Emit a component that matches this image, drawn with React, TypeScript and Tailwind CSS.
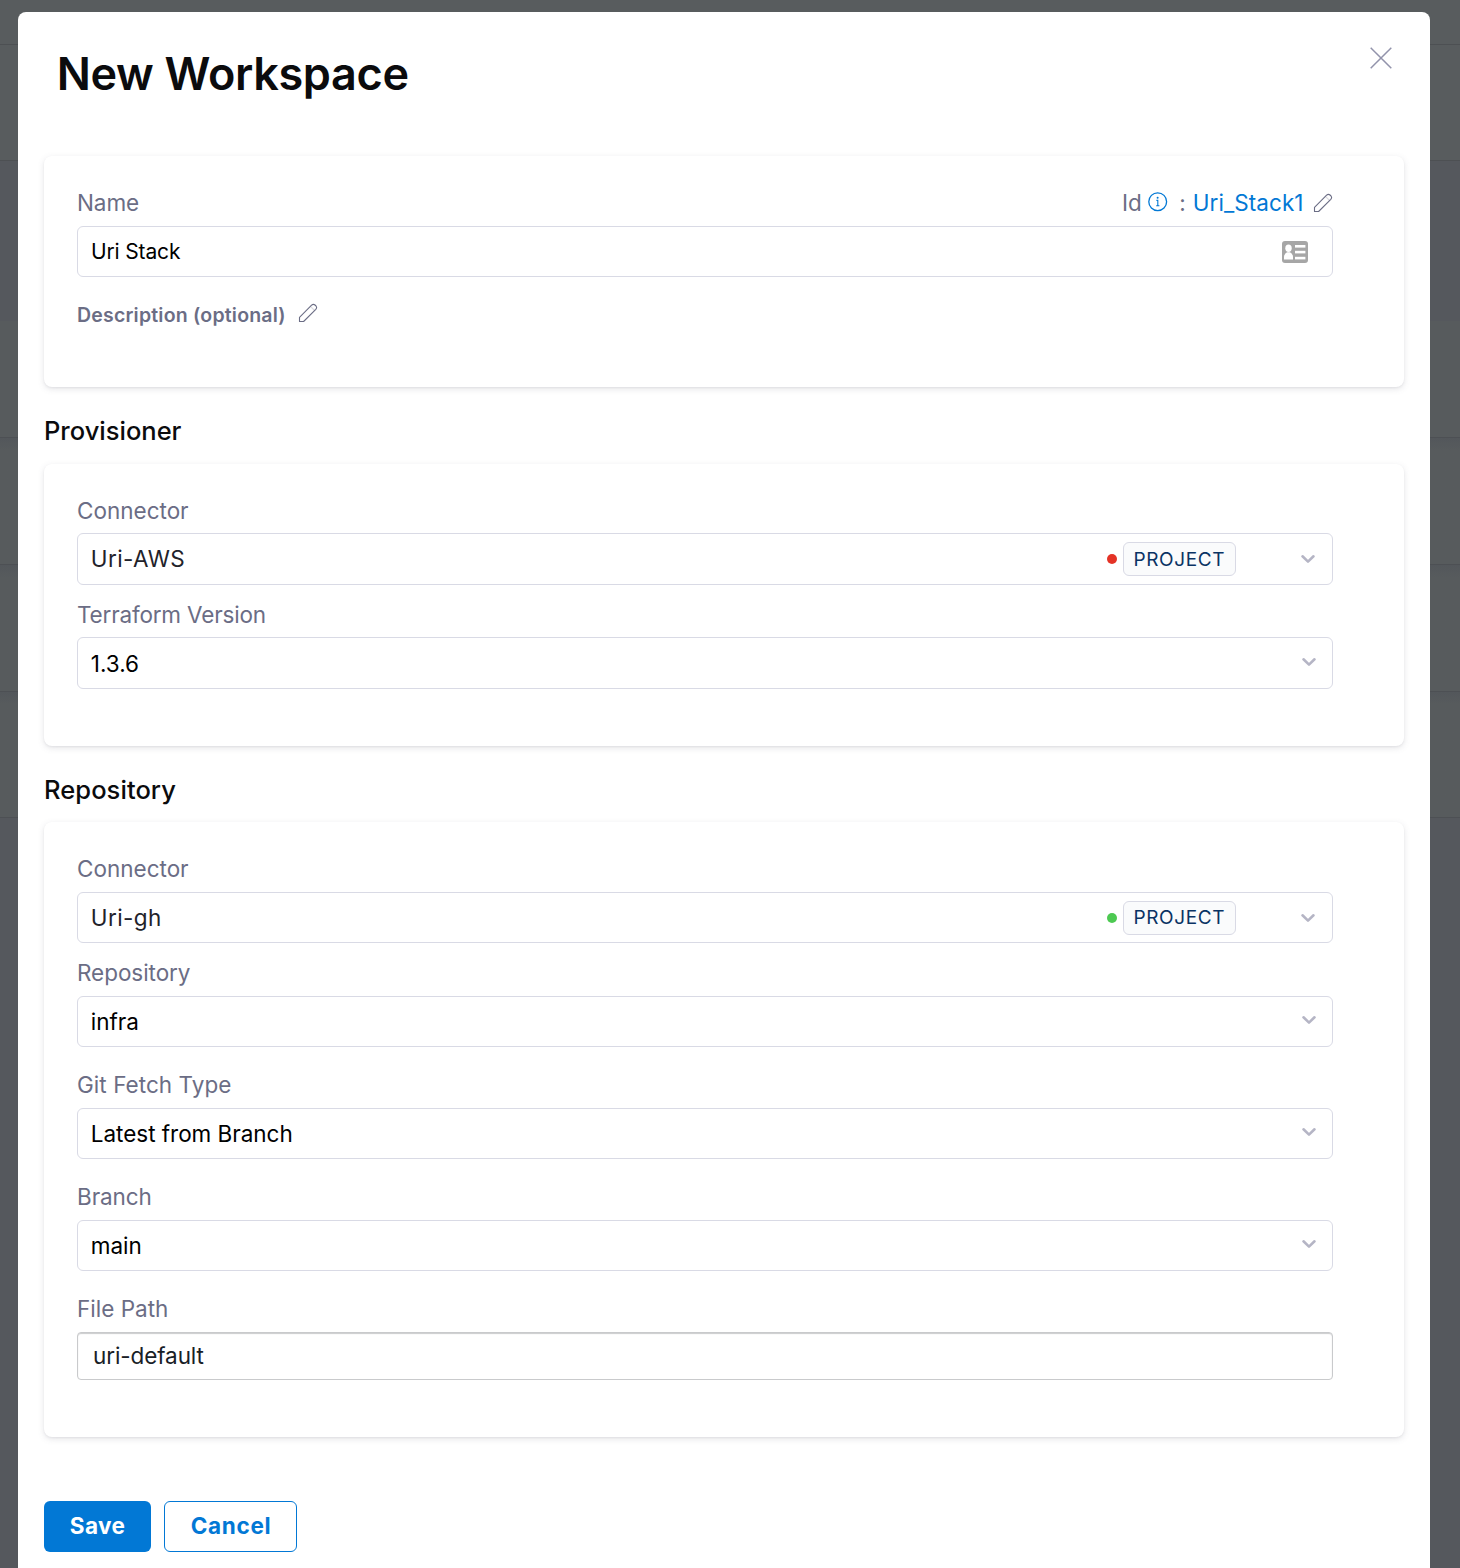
import React from "react";

function Chevron({ className }: { className: string }) {
  return (
    <svg viewBox="0 0 16 12" className={`h-3 w-4 shrink-0 ${className}`} fill="none" stroke="#b5b5c5" strokeWidth="2.6" strokeLinecap="round" strokeLinejoin="round">
      <path d="M2.5 3.3 L8 8.6 L13.5 3.3" />
    </svg>
  );
}

function Pencil({ className }: { className: string }) {
  return (
    <svg viewBox="0 0 20 20" className={`size-5 shrink-0 ${className}`} fill="none" stroke="#6b6d85" strokeWidth="1.1" strokeLinejoin="round">
      <path d="M1.5 18.5 V14.4 L13.6 2.2 Q15.3 .7 17 2 L18 3 Q19.3 4.7 17.8 6.3 L5.6 18.5 Z" />
      <path d="M12.4 3.4 L16.6 7.5" strokeOpacity=".25" />
    </svg>
  );
}

function InfoIcon() {
  return (
    <svg viewBox="0 0 20 20" className="ml-1.5 -mt-[3px] size-5" fill="none" stroke="#0278d5">
      <circle cx="9.7" cy="9.7" r="8.9" strokeWidth="1.3" />
      <path d="M8.4 8.4 H9.8 V13.7 M8.2 13.7 H11.4" strokeWidth="1.1" />
      <circle cx="9.6" cy="5.8" r="1" fill="#0278d5" stroke="none" />
    </svg>
  );
}

function ContactIcon() {
  return (
    <svg viewBox="0 0 26 22" className="mr-6 h-[22px] w-[26px]">
      <rect width="26" height="22" rx="3" fill="#a6a6a6" />
      <g fill="#fff">
        <ellipse cx="6.5" cy="7.2" rx="3.2" ry="3.7" />
        <path d="M2 18.4 V16 Q2.2 12.4 5 11.3 H8 Q10.8 12.4 11 16 V18.4 Z" />
        <rect x="13" y="4" width="10.4" height="2.6" />
        <rect x="13" y="9.8" width="10.4" height="2.6" />
        <rect x="13" y="15.8" width="10.4" height="2.6" />
      </g>
    </svg>
  );
}

const label = "block h-6 text-[22.5px] leading-6 text-[#6b6d85]";
const box = "flex w-[1256px] items-center rounded-md border border-[#d9dae5] bg-white text-[22.5px]";
const card = "w-[1360px] rounded-lg bg-white pl-[33px] shadow-[0_1px_2px_rgba(40,41,61,0.05),0_2px_6px_rgba(96,97,112,0.17)]";

function SelectBox({ value, className }: { value: string; className: string }) {
  return (
    <div className={`${box} justify-between pl-[12.8px] text-black ${className}`}>
      <span className="h-6 leading-6 tracking-[-0.03px]">{value}</span>
      <Chevron className="mr-[15px] -mt-[3px]" />
    </div>
  );
}

function ConnectorBox({ value, dot, className }: { value: string; dot: string; className: string }) {
  return (
    <div className={`${box} pl-[12.8px] tracking-[0.4px] text-[#22222a] ${className}`}>
      <span className="flex-1">{value}</span>
      <span className={`size-2.5 rounded-full ${dot}`} />
      <span className="ml-1.5 flex h-[34px] w-[113px] items-center rounded-md border border-[#d9dae5] bg-[#fafbfc] pl-[9.5px] pt-0.5 text-[19px] tracking-[0.62px] text-[#0a3364]">
        PROJECT
      </span>
      <Chevron className="mr-4 ml-16" />
    </div>
  );
}

export default function App() {
  return (
    <div className="relative h-[1568px] w-[1460px] overflow-hidden bg-[#55585d] font-['Inter',sans-serif]">
      <div className="absolute inset-0 flex flex-col">
        <div className="h-[45px] border-b border-[#4d5053] bg-[#585c5e]" />
        <div className="h-[116px] border-b border-[#4d5053] bg-[#585c5e]" />
        <div className="h-40" />
        <div className="h-[117px] border-b border-[#4d5054] bg-[#575b5d]" />
        <div className="h-[127px] border-b border-[#4d5054] bg-linear-to-b from-[#53575b] to-[#575b5d] to-10%" />
        <div className="h-[127px] border-b border-[#4d5054] bg-linear-to-b from-[#53575b] to-[#575b5d] to-10%" />
        <div className="h-[126px] border-b border-[#4d5054] bg-linear-to-b from-[#53575b] to-[#575b5d] to-10%" />
      </div>

      <main className="relative mt-3 ml-[18px] h-[1556px] w-[1412px] rounded-t-lg bg-white pl-[26px]">
        <header className="flex h-36 justify-between pr-[37px] pl-[12.7px]">
          <h1 className="mt-[34px] h-14 text-[45px] leading-14 font-semibold tracking-[-0.33px] text-[#0b0b0d]">New Workspace</h1>
          <svg viewBox="0 0 24 24" className="mt-[34px] size-6" stroke="#9293ab" strokeWidth="1.5" fill="none">
            <path d="M1.7 1.7 L22.3 22.3 M22.3 1.7 L1.7 22.3" />
          </svg>
        </header>

        <section className={`${card} h-[231px] pt-[35px]`}>
          <div className="flex h-6 w-[1256px] items-center">
            <span className={`${label} flex-1 tracking-[-0.1px]`}>Name</span>
            <span className={label}>Id</span>
            <InfoIcon />
            <span className={`${label} ml-[11.5px]`}>:</span>
            <span className="ml-[7px] h-6 text-[22.5px] leading-6 tracking-[0.05px] text-[#0278d5]">Uri_Stack1</span>
            <Pencil className="ml-[9.5px]" />
          </div>
          <div className={`${box} mt-[11px] h-[51px] justify-between pl-[13px]`}>
            <span className="text-[21px] tracking-[-0.15px] text-black">Uri Stack</span>
            <ContactIcon />
          </div>
          <div className="mt-[26px] flex h-6 items-center">
            <span className="mt-0.5 text-[19.5px] font-semibold tracking-[0.2px] text-[#6b6d85]">Description (optional)</span>
            <Pencil className="ml-3 -mt-1" />
          </div>
        </section>

        <h2 className="mt-7 h-8 text-[25.5px] leading-8 font-medium text-[#0b0b0d]">Provisioner</h2>
        <section className={`${card} mt-[17px] h-[282px] pt-[35px]`}>
          <label className={label}>Connector</label>
          <ConnectorBox value="Uri-AWS" dot="bg-[#e43326]" className="mt-2.5 h-[52px]" />
          <label className={`${label} mt-[18px] tracking-[-0.18px]`}>Terraform Version</label>
          <SelectBox value="1.3.6" className="mt-2.5 h-[52px] pt-px" />
        </section>

        <h2 className="mt-7 h-8 text-[25.5px] leading-8 font-medium tracking-[0.07px] text-[#0b0b0d]">Repository</h2>
        <section className={`${card} mt-4 h-[615px] pt-[35px]`}>
          <label className={label}>Connector</label>
          <ConnectorBox value="Uri-gh" dot="bg-[#4dc952]" className="mt-[11px] h-[51px]" />
          <label className={`${label} mt-[18px] tracking-[-0.05px]`}>Repository</label>
          <SelectBox value="infra" className="mt-[11px] h-[51px]" />
          <label className={`${label} mt-[26px] tracking-[0.05px]`}>Git Fetch Type</label>
          <SelectBox value="Latest from Branch" className="mt-[11px] h-[51px]" />
          <label className={`${label} mt-[26px] tracking-[-0.07px]`}>Branch</label>
          <SelectBox value="main" className="mt-[11px] h-[51px]" />
          <label className={`${label} mt-[26px]`}>File Path</label>
          <div className="mt-[11px] flex h-12 w-[1256px] items-center rounded-[4px] border border-[#c9cacc] bg-white pl-[15px] text-[22.5px] tracking-[-0.1px] text-[#182026] shadow-[inset_0_1px_1px_rgba(16,22,26,0.22)]">
            uri-default
          </div>
        </section>

        <footer className="mt-16 flex gap-[13px] text-[22.5px] leading-6">
          <button className="h-[51px] w-[107px] rounded-md bg-[#0278d5] pb-0.5 font-bold tracking-[0.4px] text-white">Save</button>
          <button className="h-[51px] w-[133px] rounded-md border border-[#0278d5] bg-white pb-0.5 pl-px font-bold tracking-[0.7px] text-[#0278d5]">Cancel</button>
        </footer>
      </main>
    </div>
  );
}
